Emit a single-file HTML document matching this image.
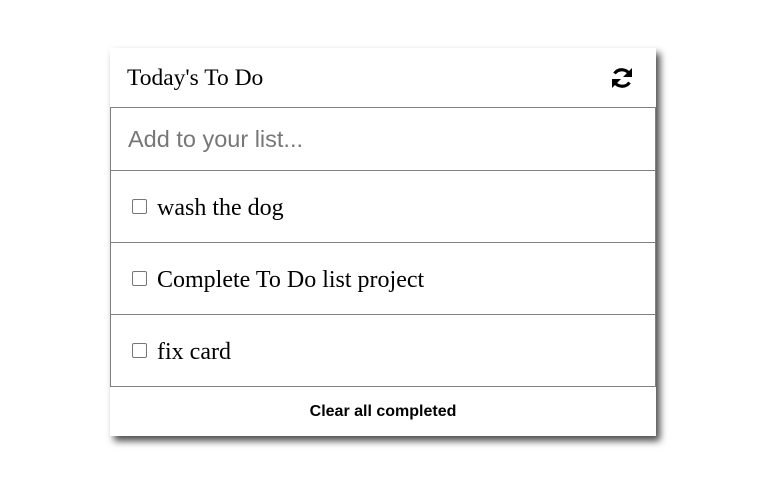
<!DOCTYPE html>
<html><head><style>
body{margin:0;width:782px;height:503px;background:#fff;position:relative;font-family:"Liberation Serif",serif;}
.card{position:absolute;left:110px;top:48px;width:546px;height:388px;background:#fff;box-shadow:4px 5px 7px rgba(0,0,0,.7);}
.hd{position:absolute;left:0;top:0;width:546px;height:59px;border-bottom:1px solid #808080;}
.hd span{position:absolute;left:17px;top:17px;font-size:23.5px;color:#000;}
.hd svg{position:absolute;left:500px;top:18px;}
.in{position:absolute;left:0;top:59px;width:544px;height:63px;border:1px solid #808080;border-top:none;}
.in span{position:absolute;left:17px;top:19px;font-family:"Liberation Sans",sans-serif;font-size:23.5px;color:#777;}
.it{position:absolute;left:0;width:544px;height:71px;border:1px solid #808080;border-top:none;}
.it i{position:absolute;left:21px;top:28px;width:15px;height:15px;border:1px solid #767676;border-radius:2px;box-sizing:border-box;}
.it span{position:absolute;left:46px;top:24px;font-size:24px;color:#000;}
.ft{position:absolute;left:0;width:546px;text-align:center;top:355px;font-family:"Liberation Sans",sans-serif;font-weight:bold;font-size:16px;}
</style></head><body>
<div class="card">
<div class="hd"><span>Today's To Do</span>
<svg width="24" height="24" viewBox="0 0 24 24"><path d="M20 9A9 9 0 0 0 4.5 7.5" stroke="#000" stroke-width="3.2" fill="none"/><path d="M22 2v9h-9z" fill="#000"/><path d="M4 15a9 9 0 0 0 15.5 1.5" stroke="#000" stroke-width="3.2" fill="none"/><path d="M2 22v-9h9z" fill="#000"/></svg></div>
<div class="in"><span>Add to your list...</span></div>
<div class="it" style="top:123px"><i></i><span>wash the dog</span></div>
<div class="it" style="top:195px"><i></i><span>Complete To Do list project</span></div>
<div class="it" style="top:267px"><i></i><span>fix card</span></div>
<div class="ft">Clear all completed</div>
</div>
</body></html>
